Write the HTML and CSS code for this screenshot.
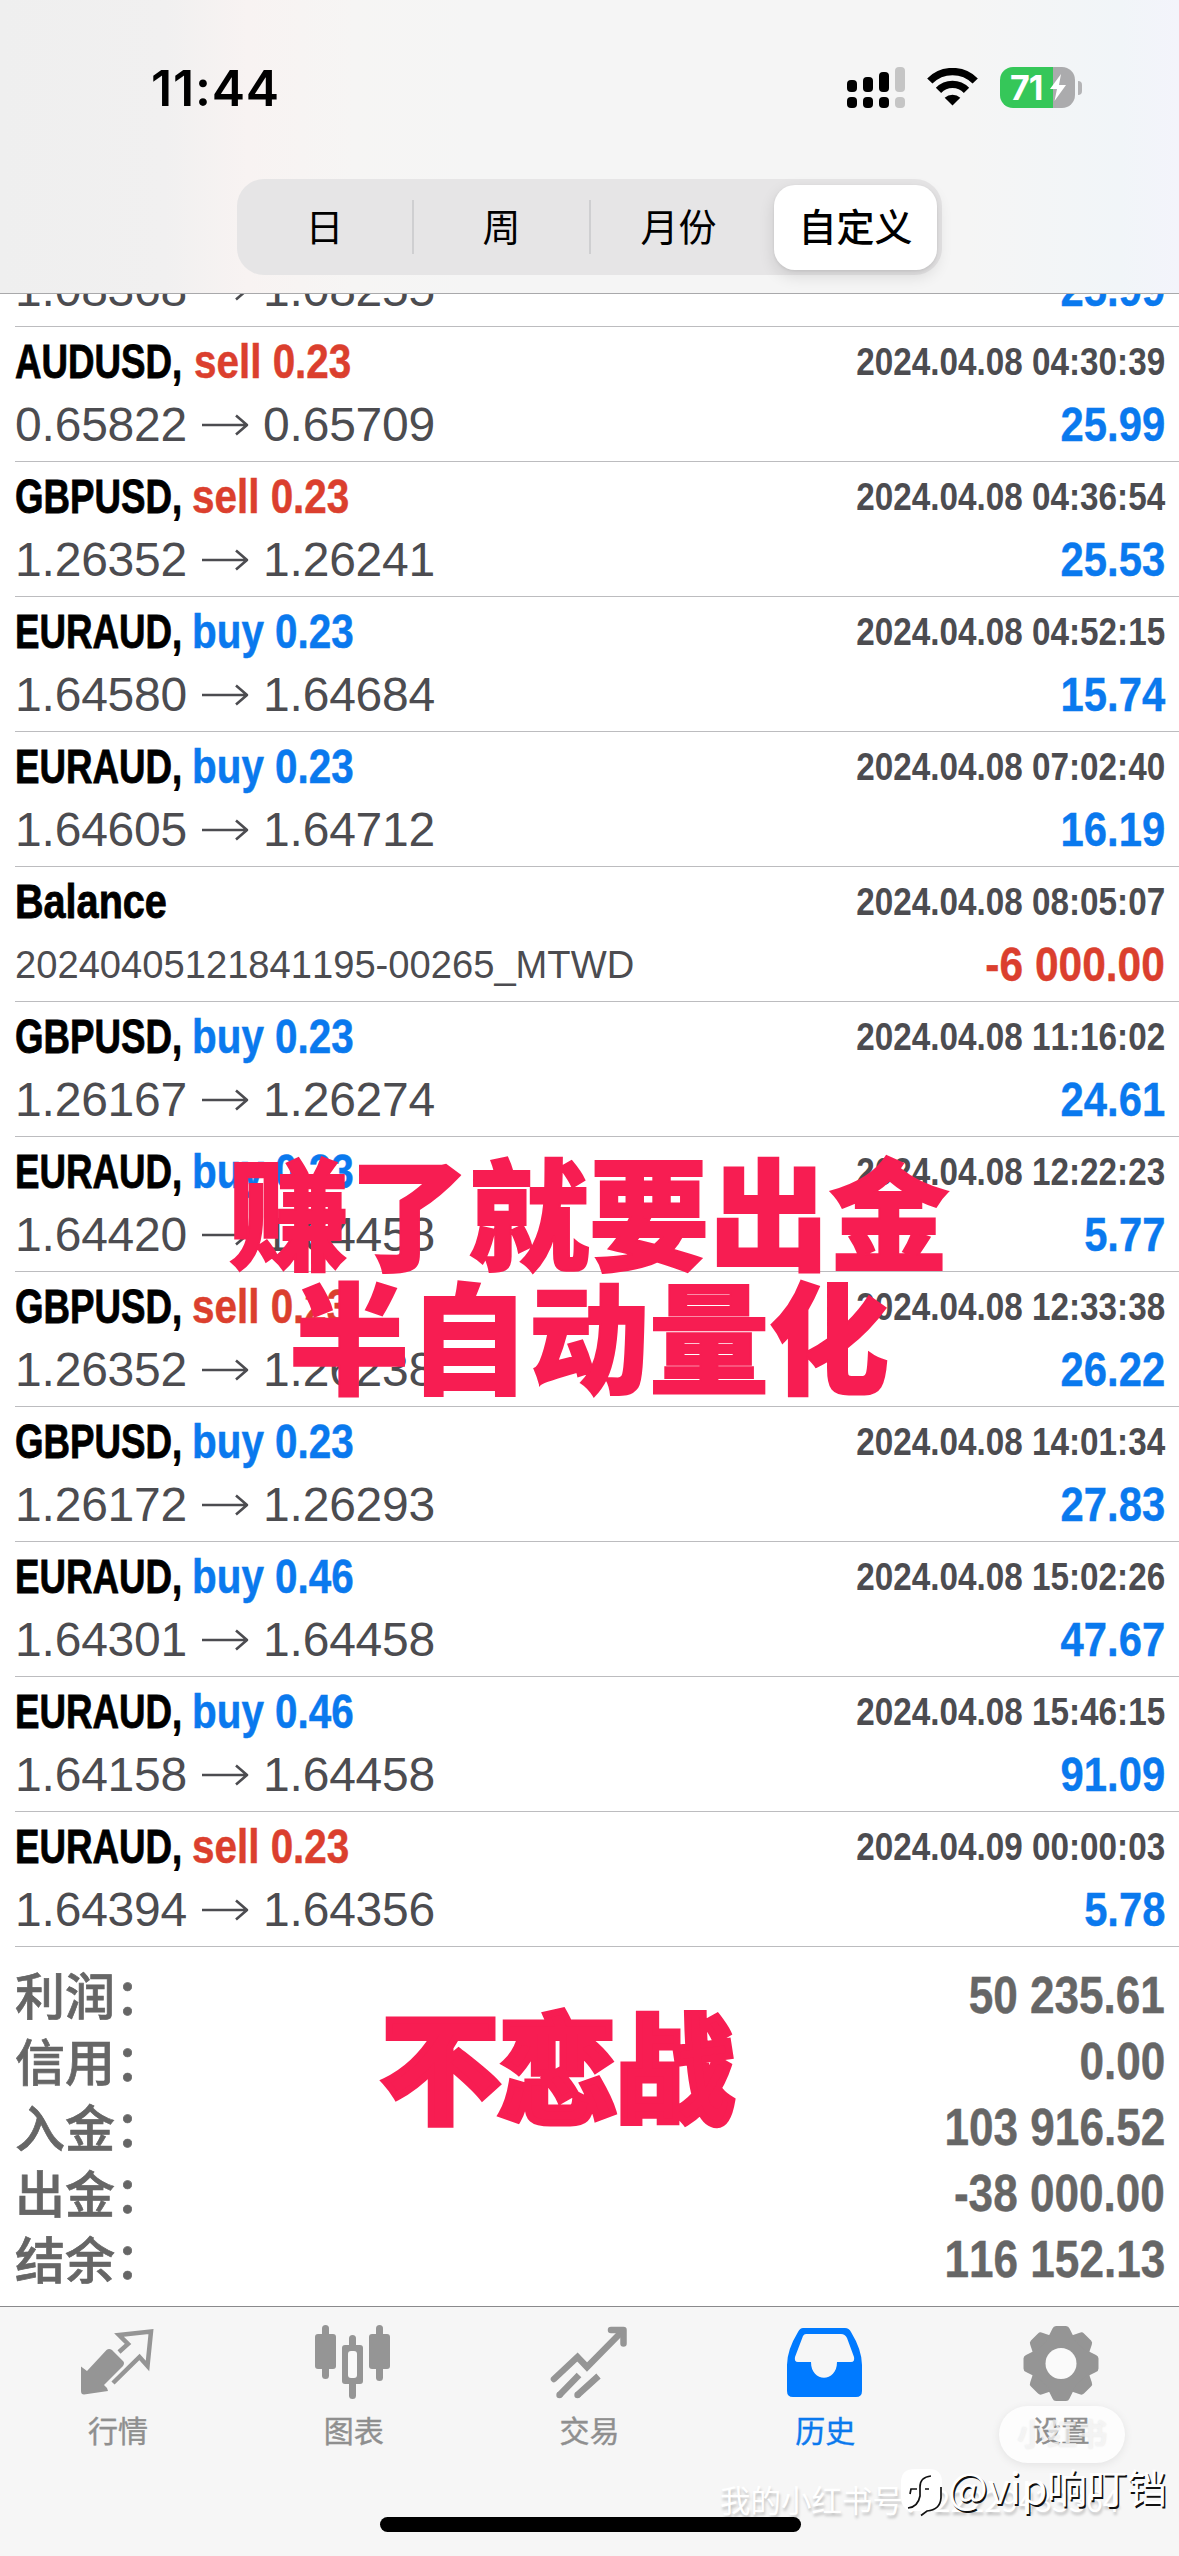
FILE: index.html
```
<!DOCTYPE html>
<html lang="zh-CN">
<head>
<meta charset="utf-8">
<title>历史</title>
<link rel="stylesheet" href="styles.css">
</head>
<body>
<svg width="0" height="0" class="defs">
  <symbol id="arrow" viewBox="0 0 48 24"><path d="M1 12H46M35 2.5 46 12 35 21.5" fill="none" stroke="#4c4c50" stroke-width="2.6" stroke-linejoin="round"/></symbol>
</svg>
<div class="screen">
  <header class="top">
    <div class="status">
      <span class="time">11:44</span>
      <div class="status-icons">
        <svg class="signal" width="59" height="42" viewBox="0 0 59 42"><g fill="#000"><rect x="0" y="13" width="10" height="12" rx="4"/><rect x="16" y="10" width="10" height="15" rx="4"/><rect x="32" y="5" width="10" height="20" rx="4"/><rect x="0" y="30" width="10" height="11" rx="4"/><rect x="16" y="30" width="10" height="11" rx="4"/><rect x="32" y="30" width="10" height="11" rx="4"/></g><g fill="#c5c5c5"><rect x="48" y="0" width="10" height="25" rx="4"/><rect x="48" y="30" width="10" height="11" rx="4"/></g></svg>
        <svg class="wifi" width="51" height="38" viewBox="0 0 51 38"><g fill="none" stroke="#000" stroke-width="7.400"><path d="M2.800 13A32 32 0 0 1 48.200 13"/><path d="M11.500 22.300A19.500 19.500 0 0 1 39.500 22.300"/></g><path d="M25.500 37.500 17.700 29.700A11.500 11.500 0 0 1 33.300 29.700Z"/></svg>
        <div class="battery"><span>71</span><svg width="16" height="27" viewBox="0 0 16 27"><path d="M11 0 0 15H7L4.500 27 16 11H9Z" fill="#fff"/></svg></div><i class="nub"></i>
      </div>
    </div>
    <nav class="segments">
      <span>日</span><i></i><span>周</span><i></i><span>月份</span><span class="on">自定义</span>
    </nav>
  </header>

  <main class="list">
    <div class="cut"><section class="row short">
      <div class="line"><span class="price">1.08368</span><svg class="arr"><use href="#arrow"/></svg><span class="price">1.08255</span><b class="amt">25.99</b></div>
    </section></div>
    <section class="row">
      <div class="line"><b class="sym aud">AUDUSD,</b><b class="side sell">sell 0.23</b><time>2024.04.08 04:30:39</time></div>
      <div class="line"><span class="price">0.65822</span><svg class="arr"><use href="#arrow"/></svg><span class="price">0.65709</span><b class="amt">25.99</b></div>
    </section>
    <section class="row">
      <div class="line"><b class="sym">GBPUSD,</b><b class="side sell">sell 0.23</b><time>2024.04.08 04:36:54</time></div>
      <div class="line"><span class="price">1.26352</span><svg class="arr"><use href="#arrow"/></svg><span class="price">1.26241</span><b class="amt">25.53</b></div>
    </section>
    <section class="row">
      <div class="line"><b class="sym">EURAUD,</b><b class="side buy">buy 0.23</b><time>2024.04.08 04:52:15</time></div>
      <div class="line"><span class="price">1.64580</span><svg class="arr"><use href="#arrow"/></svg><span class="price">1.64684</span><b class="amt">15.74</b></div>
    </section>
    <section class="row">
      <div class="line"><b class="sym">EURAUD,</b><b class="side buy">buy 0.23</b><time>2024.04.08 07:02:40</time></div>
      <div class="line"><span class="price">1.64605</span><svg class="arr"><use href="#arrow"/></svg><span class="price">1.64712</span><b class="amt">16.19</b></div>
    </section>
    <section class="row">
      <div class="line"><b class="sym bal">Balance</b><time>2024.04.08 08:05:07</time></div>
      <div class="line"><span class="note">20240405121841195-00265_MTWD</span><b class="amt sell">-6 000.00</b></div>
    </section>
    <section class="row">
      <div class="line"><b class="sym">GBPUSD,</b><b class="side buy">buy 0.23</b><time>2024.04.08 11:16:02</time></div>
      <div class="line"><span class="price">1.26167</span><svg class="arr"><use href="#arrow"/></svg><span class="price">1.26274</span><b class="amt">24.61</b></div>
    </section>
    <section class="row">
      <div class="line"><b class="sym">EURAUD,</b><b class="side buy">buy 0.23</b><time>2024.04.08 12:22:23</time></div>
      <div class="line"><span class="price">1.64420</span><svg class="arr"><use href="#arrow"/></svg><span class="price">1.64458</span><b class="amt">5.77</b></div>
    </section>
    <section class="row">
      <div class="line"><b class="sym">GBPUSD,</b><b class="side sell">sell 0.23</b><time>2024.04.08 12:33:38</time></div>
      <div class="line"><span class="price">1.26352</span><svg class="arr"><use href="#arrow"/></svg><span class="price">1.26238</span><b class="amt">26.22</b></div>
    </section>
    <section class="row">
      <div class="line"><b class="sym">GBPUSD,</b><b class="side buy">buy 0.23</b><time>2024.04.08 14:01:34</time></div>
      <div class="line"><span class="price">1.26172</span><svg class="arr"><use href="#arrow"/></svg><span class="price">1.26293</span><b class="amt">27.83</b></div>
    </section>
    <section class="row">
      <div class="line"><b class="sym">EURAUD,</b><b class="side buy">buy 0.46</b><time>2024.04.08 15:02:26</time></div>
      <div class="line"><span class="price">1.64301</span><svg class="arr"><use href="#arrow"/></svg><span class="price">1.64458</span><b class="amt">47.67</b></div>
    </section>
    <section class="row">
      <div class="line"><b class="sym">EURAUD,</b><b class="side buy">buy 0.46</b><time>2024.04.08 15:46:15</time></div>
      <div class="line"><span class="price">1.64158</span><svg class="arr"><use href="#arrow"/></svg><span class="price">1.64458</span><b class="amt">91.09</b></div>
    </section>
    <section class="row">
      <div class="line"><b class="sym">EURAUD,</b><b class="side sell">sell 0.23</b><time>2024.04.09 00:00:03</time></div>
      <div class="line"><span class="price">1.64394</span><svg class="arr"><use href="#arrow"/></svg><span class="price">1.64356</span><b class="amt">5.78</b></div>
    </section>
  </main>

  <section class="totals">
    <div><span>利润：</span><b>50 235.61</b></div>
    <div><span>信用：</span><b>0.00</b></div>
    <div><span>入金：</span><b>103 916.52</b></div>
    <div><span>出金：</span><b>-38 000.00</b></div>
    <div><span>结余：</span><b>116 152.13</b></div>
  </section>

  <nav class="tabs">
    <div class="tab">
      <svg width="80" height="80" viewBox="0 0 80 80"><path d="M3 32.500V57Q3 60.500 6 60.500L30 57Q29 53 26 51L45 32Q47 29 45 27L34 16Q31 14 28.500 16L9 37Z" fill="#959595"/><path d="M41 18 50 10 41 1 73-2.500 69.500 32 61.500 23 35 49" fill="none" stroke="#959595" stroke-width="4.500"/></svg>
      <span>行情</span>
    </div>
    <div class="tab">
      <svg width="80" height="80" viewBox="0 0 80 80"><g fill="#959595"><rect x="8" y="-9" width="7" height="54" rx="3.500"/><rect x="1" y="0" width="21" height="35" rx="3"/><rect x="35" y="1" width="7" height="64" rx="3.500"/><rect x="28" y="11" width="21" height="39" rx="3"/><rect x="62" y="-9" width="7" height="56" rx="3.500"/><rect x="55" y="0" width="21" height="35" rx="3"/></g><rect x="34" y="17" width="9" height="27" rx="3" fill="#f9f9f9"/></svg>
      <span>图表</span>
    </div>
    <div class="tab">
      <svg width="80" height="80" viewBox="0 0 80 80"><g fill="none" stroke="#959595" stroke-width="6.500"><path d="M5 45 28.500 23 38 33 73-2.500" stroke-linecap="round"/><path d="M62-4H74.500V9.500" stroke-linecap="round" stroke-linejoin="round"/><path d="M10.500 61 30 41M28.500 61 49.500 42"/></g><g fill="#959595"><circle cx="10.500" cy="61" r="3.200"/><circle cx="28.500" cy="61" r="3.200"/></g></svg>
      <span>交易</span>
    </div>
    <div class="tab active">
      <svg width="80" height="80" viewBox="0 0 80 80"><path fill="#007aff" fill-rule="evenodd" d="M16-6H60Q64-6 66-2Q77 16 77 31V57Q77 63 71 63H8Q2 63 2 57V31Q2 16 13-2Q15-6 18-6ZM21 0Q19 0 18 2L10 23Q9 28 13 28H26C26 49 52 49 52 28H66Q70 28 69 23L62 4Q60 0 56 0Z"/></svg>
      <span>历史</span>
    </div>
    <div class="tab">
      <svg width="80" height="80" viewBox="-40 -29.500 80 80"><g fill="#959595"><circle r="29.500"/><path id="t" d="M-13-26-8.500-35Q-7.500-37.500-5-37.500H5Q7.500-37.500 8.500-35L13-26Z"/><use href="#t" transform="rotate(45)"/><use href="#t" transform="rotate(90)"/><use href="#t" transform="rotate(135)"/><use href="#t" transform="rotate(180)"/><use href="#t" transform="rotate(225)"/><use href="#t" transform="rotate(270)"/><use href="#t" transform="rotate(315)"/></g><circle r="15.500" fill="#fafafa"/></svg>
      <span class="settings">设置</span>
      <div class="pill"></div><div class="pill-text">小红书</div>
    </div>
  </nav>
  <div class="home"></div>

  <div class="caption one">赚了就要出金<br>半自动量化</div>
  <div class="caption two">不恋战</div>
  <div class="faint-mark">我的小红书号：22229433364</div>
  <div class="mark">
    <svg width="42" height="50" viewBox="0 0 42 50"><path d="M14 0H28Q41 0 41 13V28Q41 41 28 42L20 46V42H8Q0 38 0 28V13Q0 0 14 0Z" fill="#fff"/><path d="M40 18V29Q39 41 26 42L20 46.500M9 25 10 20H16M30 7Q19 8 19 18V27Q17 38 7 39M24 20H28" fill="none" stroke="#111" stroke-width="1.700"/></svg>
    <span class="vip">@vip</span><span>响叮铛</span>
  </div>
</div>
</body>
</html>
```
FILE: styles.css
```
* { box-sizing: border-box; }
body { margin: 0; background: #fff; font-family: "Liberation Sans", "Noto Sans CJK SC", sans-serif; font-kerning: none; }
.defs { position: absolute; }
.screen { position: relative; width: 1179px; height: 2556px; overflow: hidden; display: flex; flex-direction: column; }

.top { height: 294px; flex: none; border-bottom: 1px solid #a9a9ab; background: linear-gradient(90deg, #efefef 0, #f1f0f0 14%, #f8f3f2 21%, #f6f5f4 30%, #f5f5f5 40%, #f5f5f5 82%, #f1f5f8 95%, #f3f4fb 100%); display: flex; flex-direction: column; align-items: center; }
.status { width: 100%; height: 179px; padding: 67px 97px 0 151px; display: flex; justify-content: space-between; align-items: flex-start; }
.time { font: 600 50px/42px Inter, sans-serif; letter-spacing: 0.8px; }
.status-icons { display: flex; align-items: flex-start; }
.signal { margin-right: 21px; }
.wifi { margin: 1px 22px 0 0; }
.battery { width: 75px; height: 41px; border-radius: 13px; background: linear-gradient(90deg, #35c759 53px, #ababad 53px); color: #fff; font: 700 34px/41px Inter, sans-serif; padding-left: 10px; display: flex; align-items: center; }
.battery span { width: 40px; letter-spacing: -1px; }
.nub { width: 4px; height: 14px; margin: 14px 0 0 3px; background: #b4b4b6; border-radius: 0 5px 5px 0; }

.segments { width: 705px; height: 96px; border-radius: 27px; background: #e6e5e6; display: flex; align-items: center; padding-right: 5px; font: 400 38px/80px "Noto Sans CJK SC", sans-serif; }
.segments span { flex: 1; text-align: center; height: 85px; }
.segments i { width: 2px; height: 54px; background: #cfcfd1; }
.segments .on { flex: none; width: 163px; margin-left: 8px; background: #fff; border-radius: 21px; font-weight: 500; box-shadow: 0 6px 16px rgba(0,0,0,.12), 0 1px 3px rgba(0,0,0,.08); }

.list { flex: none; padding-left: 15px; }
.cut { height: 33px; overflow: hidden; display: flex; flex-direction: column; justify-content: flex-end; }
.row { flex: none; height: 135px; border-bottom: 1px solid #bcbcbf; padding: 3px 14px 0 0; }
.row.short { height: 69px; padding-top: 0; }
.line { height: 63px; display: flex; align-items: flex-start; font-size: 48px; line-height: 63px; white-space: nowrap; }
.sym { width: 177px; transform: scaleX(.765); transform-origin: left; -webkit-text-stroke: .8px; }
.sym.aud { width: 179px; }
.sym.bal { transform: scaleX(.825); }
.side { width: 170px; transform: scaleX(.842); transform-origin: left; -webkit-text-stroke: .5px; }
.sell { color: #db3f2e; }
.buy { color: #0a79ee; }
time { margin-left: auto; font-size: 39px; line-height: 63px; font-weight: 700; color: #4c4c50; transform: scaleX(.853); transform-origin: right; }
.price { width: 174px; color: #4c4c50; letter-spacing: -.2px; }
.arr { width: 48px; height: 24px; margin: 20px 14px 0 12px; }
.note { color: #4c4c50; font-size: 39px; line-height: 63px; transform: scaleX(.978); transform-origin: left; }
.amt { margin-left: auto; color: #0a79ee; transform: scaleX(.87); transform-origin: right; -webkit-text-stroke: .4px; }
.amt.sell { color: #db3f2e; transform: scaleX(.885); }

.totals { height: 359px; flex: none; padding: 15px 14px 0 15px; }
.totals div { height: 66px; display: flex; justify-content: space-between; font-size: 51px; line-height: 68px; color: #666; }
.totals span { font: 500 50px/62px "Noto Sans CJK SC", sans-serif; -webkit-text-stroke: .7px; }
.totals b { transform: scaleX(.865); transform-origin: right; -webkit-text-stroke: .4px; }

.tabs { flex: 1; border-top: 1px solid #8a8a8c; background: #f6f6f6; display: flex; }
.tab { position: relative; flex: 1; padding-top: 27px; display: flex; flex-direction: column; align-items: center; color: #8f8f8f; font: 400 30px/36px "Noto Sans CJK SC", sans-serif; }
.tab svg { display: block; overflow: visible; margin-bottom: -3px; }
.tab span { -webkit-text-stroke: .4px; }
.active { color: #0a79ee; }
.settings { position: relative; z-index: 1; font-size: 29px; }
.pill { position: absolute; left: 56px; top: 99px; width: 126px; height: 57px; border-radius: 29px; background: #fdfdfd; box-shadow: 0 2px 10px rgba(0,0,0,.08); }
.pill-text { position: absolute; z-index: 2; left: 56px; top: 99px; width: 126px; font-size: 30px; line-height: 52px; text-align: center; color: rgba(248,248,248,.75); font-weight: 700; text-shadow: 0 0 2px rgba(0,0,0,.1); }
.home { position: absolute; left: 380px; top: 2517px; width: 421px; height: 15px; border-radius: 8px; background: #000; }

.caption { position: absolute; color: #f71d52; font: 900 120px/124px "Noto Sans CJK SC", sans-serif; text-align: center; white-space: nowrap; -webkit-text-stroke: 2px #f71d52; }
.one { left: 229px; top: 1147px; width: 720px; }
.two { left: 382px; top: 2000px; font-size: 117px; -webkit-text-stroke-width: 7px; }
.faint-mark { position: absolute; left: 720px; top: 2479px; color: #fff; font: 400 30.5px/40px "Noto Sans CJK SC", sans-serif; text-shadow: 1px 3px 3px rgba(0,0,0,.22); white-space: nowrap; }
.mark { position: absolute; left: 901px; top: 2467px; display: flex; font: 400 40px/38px "Noto Sans CJK SC", sans-serif; color: #fff; text-shadow: 1.500px 1.500px 0 #111; white-space: nowrap; }
.mark svg { margin: 2px 5px 0 0; }
.mark .vip { width: 99px; font-size: 42px; }
```
